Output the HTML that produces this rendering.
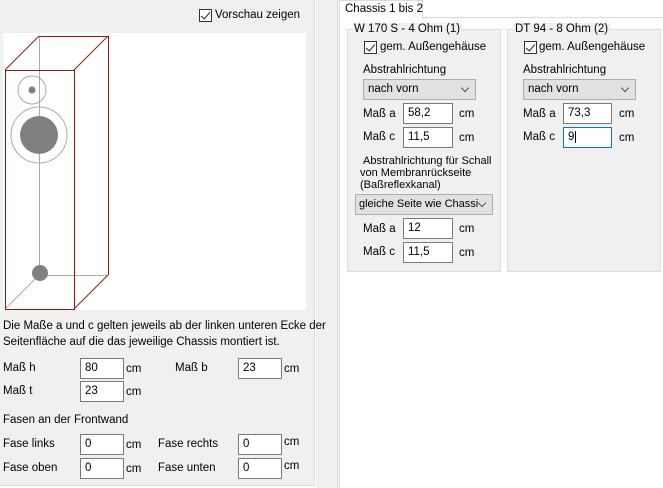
<!DOCTYPE html>
<html><head><meta charset="utf-8"><style>
*{margin:0;padding:0;box-sizing:border-box}
body{width:663px;height:488px;background:#fff;font-family:"Liberation Sans",sans-serif;font-size:11.5px;color:#000;position:relative;overflow:hidden}
.a{position:absolute;white-space:nowrap}
.in{position:absolute;background:#fff;border:1px solid #7a7a7a;height:21px;padding:3px 0 0 4px}
.cb{position:absolute;width:13px;height:13px;border:1px solid #333;background:#fff}
.cb:after{content:"";position:absolute;left:3px;top:0px;width:4px;height:8px;border-right:1.5px solid #222;border-bottom:1.5px solid #222;transform:rotate(40deg)}
.combo{position:absolute;background:#e1e1e1;border:1px solid #adadad;height:21px;padding:3px 0 0 4px;overflow:hidden;white-space:nowrap}
.combo:after{content:"";position:absolute;right:7px;top:5px;width:5px;height:5px;border-right:1px solid #555;border-bottom:1px solid #555;transform:rotate(45deg)}
.grp{position:absolute;background:#f0f0f0;border:1px solid #dcdcdc}
.lg{position:absolute;background:#f0f0f0;padding:0 2px}
</style></head><body>
<div class="a" style="left:0;top:0;width:315px;height:486px;background:#f0f0f0;border-right:1px solid #dcdcdc;border-bottom:1px solid #dcdcdc"></div>
<div class="a" style="left:316px;top:0;width:22px;height:488px;background:#f0f0f0;border-right:1px solid #d8d8d8"></div>
<div class="cb" style="left:199px;top:9px"></div>
<div class="a" style="left:215px;top:9px">Vorschau zeigen</div>
<svg class="a" style="left:3px;top:33px" width="303" height="277" viewBox="3 33 303 277">
<rect x="3" y="33" width="303" height="277" fill="#fff"/>
<g stroke="#aaa" stroke-width="1" fill="none">
<line x1="39.5" y1="36" x2="39.5" y2="275"/><line x1="39" y1="275.5" x2="108" y2="275.5"/><line x1="5" y1="309" x2="39" y2="275"/>
<circle cx="32" cy="90" r="14"/><circle cx="39" cy="135" r="28"/></g>
<g fill="#808080"><circle cx="32" cy="90" r="3.5"/><circle cx="39" cy="135" r="19"/><circle cx="40" cy="273" r="8"/></g>
<g stroke="#8b1a10" stroke-width="1" fill="none">
<rect x="5.5" y="70.5" width="69" height="239"/><line x1="39" y1="36.5" x2="108.5" y2="36.5"/><line x1="108.5" y1="36" x2="108.5" y2="275"/>
<line x1="5" y1="70" x2="39" y2="36"/><line x1="74" y1="70" x2="108" y2="36"/><line x1="74" y1="309" x2="108" y2="275"/></g>
</svg>
<div class="a" style="left:3px;top:318px;line-height:16px">Die Maße a und c gelten jeweils ab der linken unteren Ecke der<br>Seitenfläche auf die das jeweilige Chassis montiert ist.</div>
<div class="a" style="left:3px;top:362px">Maß h</div><div class="in" style="left:80px;top:358px;width:44px">80</div><div class="a" style="left:126px;top:363px">cm</div>
<div class="a" style="left:175px;top:362px">Maß b</div><div class="in" style="left:238px;top:358px;width:44px">23</div><div class="a" style="left:284px;top:363px">cm</div>
<div class="a" style="left:3px;top:385px">Maß t</div><div class="in" style="left:80px;top:381px;width:44px">23</div><div class="a" style="left:126px;top:386px">cm</div>
<div class="a" style="left:3px;top:414px">Fasen an der Frontwand</div>
<div class="a" style="left:3px;top:438px">Fase links</div><div class="in" style="left:80px;top:434px;width:44px">0</div><div class="a" style="left:126px;top:439px">cm</div>
<div class="a" style="left:158px;top:438px">Fase rechts</div><div class="in" style="left:238px;top:434px;width:44px">0</div><div class="a" style="left:284px;top:436px">cm</div>
<div class="a" style="left:3px;top:462px">Fase oben</div><div class="in" style="left:80px;top:458px;width:44px">0</div><div class="a" style="left:126px;top:463px">cm</div>
<div class="a" style="left:158px;top:462px">Fase unten</div><div class="in" style="left:238px;top:458px;width:44px">0</div><div class="a" style="left:284px;top:460px">cm</div>

<div class="a" style="left:339px;top:17px;width:324px;height:471px;border-left:1px solid #d9d9d9;border-top:1px solid #d9d9d9"></div>
<div class="a" style="left:339px;top:0;width:84px;height:19px;background:#fff;border:1px solid #d9d9d9;border-bottom:none;padding:2px 0 0 5px">Chassis 1 bis 2</div>

<div class="grp" style="left:347px;top:29px;width:154px;height:243px"></div>
<div class="lg" style="left:352px;top:23px">W 170 S - 4 Ohm (1)</div>
<div class="cb" style="left:364px;top:41px"></div><div class="a" style="left:380px;top:41px">gem. Außengehäuse</div>
<div class="a" style="left:363px;top:64px">Abstrahlrichtung</div>
<div class="combo" style="left:363px;top:79px;width:113px">nach vorn</div>
<div class="a" style="left:363px;top:108px">Maß a</div><div class="in" style="left:403px;top:103px;width:50px">58,2</div><div class="a" style="left:459px;top:108px">cm</div>
<div class="a" style="left:363px;top:131px">Maß c</div><div class="in" style="left:403px;top:127px;width:50px">11,5</div><div class="a" style="left:459px;top:132px">cm</div>
<div class="a" style="left:360px;top:155px;line-height:12px;font-size:11px">&nbsp;Abstrahlrichtung für Schall<br>von Membranrückseite<br>(Baßreflexkanal)</div>
<div class="combo" style="left:355px;top:194px;width:138px;font-size:11px;padding-left:3px">gleiche Seite wie Chassi</div>
<div class="a" style="left:363px;top:223px">Maß a</div><div class="in" style="left:403px;top:218px;width:50px">12</div><div class="a" style="left:459px;top:223px">cm</div>
<div class="a" style="left:363px;top:246px">Maß c</div><div class="in" style="left:403px;top:242px;width:50px">11,5</div><div class="a" style="left:459px;top:247px">cm</div>

<div class="grp" style="left:507px;top:29px;width:154px;height:243px"></div>
<div class="lg" style="left:513px;top:23px">DT 94 - 8 Ohm (2)</div>
<div class="cb" style="left:524px;top:41px"></div><div class="a" style="left:539px;top:41px">gem. Außengehäuse</div>
<div class="a" style="left:523px;top:64px">Abstrahlrichtung</div>
<div class="combo" style="left:523px;top:79px;width:113px">nach vorn</div>
<div class="a" style="left:523px;top:108px">Maß a</div><div class="in" style="left:563px;top:103px;width:49px">73,3</div><div class="a" style="left:619px;top:108px">cm</div>
<div class="a" style="left:523px;top:131px">Maß c</div><div class="in" style="left:563px;top:127px;width:49px;border-color:#0078d7">9<span style="border-left:1px solid #000;margin-left:1px"></span></div><div class="a" style="left:619px;top:132px">cm</div>
</body></html>
